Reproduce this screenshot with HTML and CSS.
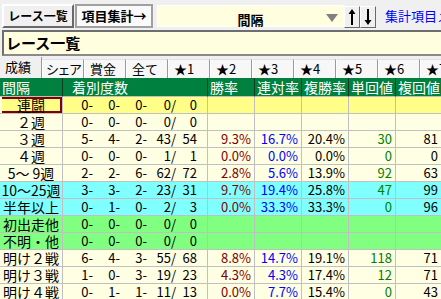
FILE: index.html
```html
<!DOCTYPE html>
<html lang="ja">
<head>
  <meta charset="UTF-8">
  <title>項目集計 | 間隔</title>
  <link rel="stylesheet" href="styles.css">
</head>
<body>
  <div class="app">
    <div class="toolbar">
      <button class="btn">レース一覧</button>
      <button class="btn on">項目集計→</button>
      <div class="combo">
        <span class="combo-text">間隔</span>
        <span class="caret"></span>
      </div>
      <button class="arrow">
        <svg width="8" height="18" viewBox="0 0 8 18"><path d="M4 1 L0.5 6 H3 V17 H5 V6 H7.5 Z" fill="#000"/></svg>
      </button>
      <button class="arrow">
        <svg width="8" height="18" viewBox="0 0 8 18"><path d="M4 17 L0.5 12 H3 V1 H5 V12 H7.5 Z" fill="#000"/></svg>
      </button>
      <span class="menu-link">集計項目メニュー</span>
    </div>

    <div class="title">レース一覧</div>

    <div class="tabs">
      <div class="tab active">成績</div>
      <div class="tab narrow">シェア</div>
      <div class="tab">賞金</div>
      <div class="tab">全て</div>
      <div class="tab">★1</div>
      <div class="tab">★2</div>
      <div class="tab">★3</div>
      <div class="tab">★4</div>
      <div class="tab">★5</div>
      <div class="tab">★6</div>
      <div class="tab">★7</div>
    </div>

    <table class="grid">
      <thead>
        <tr>
          <th class="w-label">間隔</th>
          <th class="w-cnt head-cnt">着別度数</th>
          <th class="w-num">勝率</th>
          <th class="w-num">連対率</th>
          <th class="w-num">複勝率</th>
          <th class="w-num">単回値</th>
          <th class="w-last">複回値</th>
        </tr>
      </thead>
      <tbody>
        <tr class="hot">
          <td class="label cur">連闘</td>
          <td><div class="cnt"><span>0-</span><span>0-</span><span>0-</span><span>0/</span><span>0</span></div></td>
          <td></td><td></td><td></td><td></td><td></td>
        </tr>
        <tr>
          <td class="label">２週</td>
          <td><div class="cnt"><span>0-</span><span>0-</span><span>0-</span><span>0/</span><span>0</span></div></td>
          <td></td><td></td><td></td><td></td><td></td>
        </tr>
        <tr>
          <td class="label">３週</td>
          <td><div class="cnt"><span>5-</span><span>4-</span><span>2-</span><span>43/</span><span>54</span></div></td>
          <td class="num win">9.3%</td><td class="num ren">16.7%</td><td class="num">20.4%</td><td class="num tan">30</td><td class="num">81</td>
        </tr>
        <tr>
          <td class="label">４週</td>
          <td><div class="cnt"><span>0-</span><span>0-</span><span>0-</span><span>1/</span><span>1</span></div></td>
          <td class="num win">0.0%</td><td class="num ren">0.0%</td><td class="num">0.0%</td><td class="num tan">0</td><td class="num">0</td>
        </tr>
        <tr>
          <td class="label">5～ 9週</td>
          <td><div class="cnt"><span>2-</span><span>2-</span><span>6-</span><span>62/</span><span>72</span></div></td>
          <td class="num win">2.8%</td><td class="num ren">5.6%</td><td class="num">13.9%</td><td class="num tan">92</td><td class="num">63</td>
        </tr>
        <tr class="cyan">
          <td class="label">10～25週</td>
          <td><div class="cnt"><span>3-</span><span>3-</span><span>2-</span><span>23/</span><span>31</span></div></td>
          <td class="num win">9.7%</td><td class="num ren">19.4%</td><td class="num">25.8%</td><td class="num tan">47</td><td class="num">99</td>
        </tr>
        <tr class="cyan">
          <td class="label">半年以上</td>
          <td><div class="cnt"><span>0-</span><span>1-</span><span>0-</span><span>2/</span><span>3</span></div></td>
          <td class="num win">0.0%</td><td class="num ren">33.3%</td><td class="num">33.3%</td><td class="num tan">0</td><td class="num">96</td>
        </tr>
        <tr class="green">
          <td class="label">初出走他</td>
          <td><div class="cnt"><span>0-</span><span>0-</span><span>0-</span><span>0/</span><span>0</span></div></td>
          <td></td><td></td><td></td><td></td><td></td>
        </tr>
        <tr class="green">
          <td class="label">不明・他</td>
          <td><div class="cnt"><span>0-</span><span>0-</span><span>0-</span><span>0/</span><span>0</span></div></td>
          <td></td><td></td><td></td><td></td><td></td>
        </tr>
        <tr>
          <td class="label">明け２戦</td>
          <td><div class="cnt"><span>6-</span><span>4-</span><span>3-</span><span>55/</span><span>68</span></div></td>
          <td class="num win">8.8%</td><td class="num ren">14.7%</td><td class="num">19.1%</td><td class="num tan">118</td><td class="num">71</td>
        </tr>
        <tr>
          <td class="label">明け３戦</td>
          <td><div class="cnt"><span>1-</span><span>0-</span><span>3-</span><span>19/</span><span>23</span></div></td>
          <td class="num win">4.3%</td><td class="num ren">4.3%</td><td class="num">17.4%</td><td class="num tan">12</td><td class="num">71</td>
        </tr>
        <tr>
          <td class="label">明け４戦</td>
          <td><div class="cnt"><span>0-</span><span>1-</span><span>1-</span><span>11/</span><span>13</span></div></td>
          <td class="num win">0.0%</td><td class="num ren">7.7%</td><td class="num">15.4%</td><td class="num tan">0</td><td class="num">43</td>
        </tr>
      </tbody>
    </table>
  </div>
</body>
</html>
```

FILE: styles.css
```css
body {
  margin: 0;
  background: #f0f0f0;
  font-family: "Noto Sans CJK JP", sans-serif;
  color: #000;
  overflow: hidden;
}

.app {
  width: 441px;
  height: 299px;
  overflow: hidden;
}

/* top bar */
.toolbar {
  display: flex;
  align-items: flex-start;
  height: 29px;
  padding-left: 2px;
  white-space: nowrap;
}

.toolbar > * {
  flex-shrink: 0;
}

.btn {
  margin: 4px 0 0 0;
  height: 24px;
  width: 72px;
  padding: 0;
  font-family: inherit;
  font-size: 12px;
  font-weight: bold;
  line-height: 18px;
  color: #000;
  background: #f0f0f0;
  border: 2px solid;
  border-color: #fff #696969 #696969 #fff;
}

.btn.on {
  width: 78px;
  margin-left: 1px;
  font-size: 13px;
  background: #fafafa;
  border-color: #a0a0a0;
}

.combo {
  position: relative;
  margin: 5px 0 0 4px;
  width: 187px;
  height: 22px;
  box-sizing: border-box;
  background: #ffffe0;
  border: 1px solid #fff;
  text-align: center;
}

.combo-text {
  font-size: 13px;
  font-weight: bold;
  line-height: 20px;
}

.caret {
  position: absolute;
  right: 5px;
  top: 8px;
  border-top: 8px solid #808080;
  border-left: 6px solid transparent;
  border-right: 6px solid transparent;
}

.arrow {
  margin: 6px 0 0 0;
  width: 16px;
  height: 22px;
  padding: 0;
  display: flex;
  align-items: center;
  justify-content: center;
  background: #f0f0f0;
  border: 1px solid;
  border-color: #fff #696969 #696969 #fff;
}

.arrow:first-of-type {
  margin-left: 4px;
}

.menu-link {
  margin: 7px 0 0 9px;
  font-size: 13px;
  line-height: 18px;
  color: #0000ff;
}

/* title box */
.title {
  margin: 1px 0 0 2px;
  height: 26px;
  box-sizing: border-box;
  padding-left: 2px;
  background: #ffffe0;
  border-top: 2px solid #6e6e6e;
  border-left: 2px solid #6e6e6e;
  border-bottom: 2px solid #8a8a8a;
  font-size: 15px;
  font-weight: bold;
  line-height: 22px;
}

/* tabs */
.tabs {
  display: flex;
  align-items: flex-end;
  height: 22px;
  white-space: nowrap;
}

.tab {
  flex: 0 0 42px;
  height: 19px;
  box-sizing: border-box;
  padding-left: 5px;
  overflow: hidden;
  background: #f7f7f7;
  border-top: 1px solid #e0e0e0;
  border-left: 1px solid #fff;
  border-right: 1px solid #9a9a9a;
  font-size: 13px;
  line-height: 18px;
}

.tab.narrow {
  padding-left: 3px;
  letter-spacing: -1.5px;
}

.tab.active {
  height: 21px;
  padding-left: 5px;
  background: #f0f0f0;
  border-top: none;
  border-left: none;
  line-height: 19px;
}

/* grid */
.grid {
  width: 442px;
  table-layout: fixed;
  border-collapse: separate;
  border-spacing: 0;
}

.grid th,
.grid td {
  box-sizing: border-box;
  padding: 0;
  border-right: 1px solid #c0c0c0;
  border-bottom: 1px solid #c0c0c0;
  white-space: nowrap;
}

.grid th {
  background: #00803f;
  color: #fff;
  font-weight: normal;
  font-size: 14px;
  line-height: 18px;
  text-align: left;
  padding-left: 2px;
  border-right-color: #163a22;
}

.w-label { width: 63px; }
.w-cnt { width: 145px; }
.w-num { width: 47px; }
.w-last { width: 46px; }

.grid th.head-cnt {
  padding-left: 9px;
}

.grid td {
  background: #ffffe4;
  font-size: 13px;
  line-height: 16px;
}

.grid .hot td { background: #ffff88; }
.grid .cyan td { background: #80ffff; }
.grid .green td { background: #80ff80; }

.grid td.label {
  font-size: 14px;
  text-align: center;
}

.grid td.cur {
  box-shadow: inset 2px 0 0 #ffffe4, inset 0 0 0 2px #800000;
  background: #ffff88;
}

.cnt {
  display: grid;
  grid-template-columns: 30px 27px 27px 29px 21px;
}

.cnt span {
  text-align: right;
}

.num {
  text-align: right;
  padding-right: 3px !important;
}

.win { color: #800000; }
.ren { color: #0000ff; }
.tan { color: #008000; }
```
